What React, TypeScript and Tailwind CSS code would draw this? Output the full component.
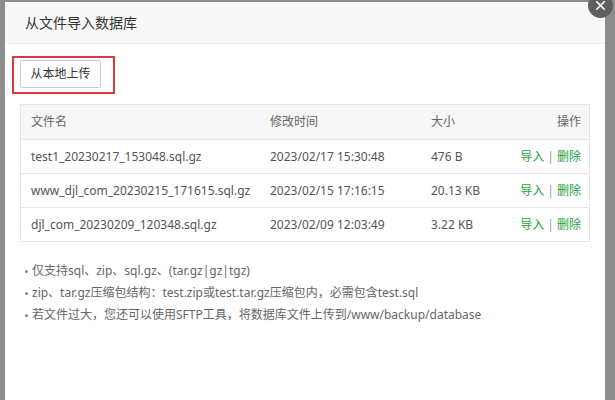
import React from "react";

const FONT = { fontFamily: '"Noto Sans", "Noto Sans CJK SC", sans-serif' };

const ROWS = [
  { name: "test1_20230217_153048.sql.gz", time: "2023/02/17 15:30:48", size: "476 B" },
  { name: "www_djl_com_20230215_171615.sql.gz", time: "2023/02/15 17:16:15", size: "20.13 KB" },
  { name: "djl_com_20230209_120348.sql.gz", time: "2023/02/09 12:03:49", size: "3.22 KB" },
];

const NOTES = [
  "仅支持sql、zip、sql.gz、(tar.gz|gz|tgz)",
  "zip、tar.gz压缩包结构：test.zip或test.tar.gz压缩包内，必需包含test.sql",
  "若文件过大，您还可以使用SFTP工具，将数据库文件上传到/www/backup/database",
];

const GRID = "grid grid-cols-[239px_161px_1fr_auto] items-center h-[34px] pl-[10px] pr-[8px]";

export default function App() {
  return (
    <div className="h-[400px] w-[615px] overflow-hidden bg-[#8d8d8d] pt-[2px] pl-[5px]" style={FONT}>
      <div className="relative h-[420px] w-[600px] bg-white">
        <div className="flex h-[42px] items-center border-b border-[#eeeeee] bg-[#f8f8f8] pl-[20px] text-[14px] text-[#333]">
          从文件导入数据库
        </div>
        <div className="absolute right-[-8px] top-[-9px] z-10 flex h-[25px] w-[25px] items-center justify-center rounded-full bg-[#5f5f5f]">
          <svg viewBox="0 0 24 24" width="15" height="15" fill="none" stroke="white" strokeWidth="2.6" strokeLinecap="round">
            <path d="M6 6l12 12M18 6L6 18" />
          </svg>
        </div>

        <div className="pt-[12px]">
          <div className="ml-[7px] inline-block border-2 border-[#d93a3e] pb-[4px] pl-[6px] pr-[12px] pt-[2px]">
            <div className="flex h-[28px] w-[81px] items-center justify-center rounded-[2px] border border-[#cccccc] bg-white text-[12px] text-[#333]">
              从本地上传
            </div>
          </div>

          <div className="ml-[15px] mt-[10px] w-[570px] border border-[#e6e6e6] text-[12px]">
            <div className={`${GRID} bg-[#f6f6f6] text-[#666]`}>
              <span>文件名</span>
              <span>修改时间</span>
              <span>大小</span>
              <span className="text-right">操作</span>
            </div>
            {ROWS.map((r) => (
              <div key={r.name} className={`${GRID} border-t border-[#e6e6e6] text-[#555]`}>
                <span>{r.name}</span>
                <span>{r.time}</span>
                <span>{r.size}</span>
                <span className="text-right">
                  <span className="text-[#20a53a]">导入</span>
                  <span className="px-[3px] text-[#999]">|</span>
                  <span className="text-[#20a53a]">删除</span>
                </span>
              </div>
            ))}
          </div>

          <ul className="ml-[20px] mt-[18px] text-[12px] leading-[22px] text-[#666]">
            {NOTES.map((n) => (
              <li key={n} className="flex items-center">
                <span className="mr-[4px] h-[3px] w-[3px] rounded-full bg-[#888]" />
                {n}
              </li>
            ))}
          </ul>
        </div>
      </div>
    </div>
  );
}
